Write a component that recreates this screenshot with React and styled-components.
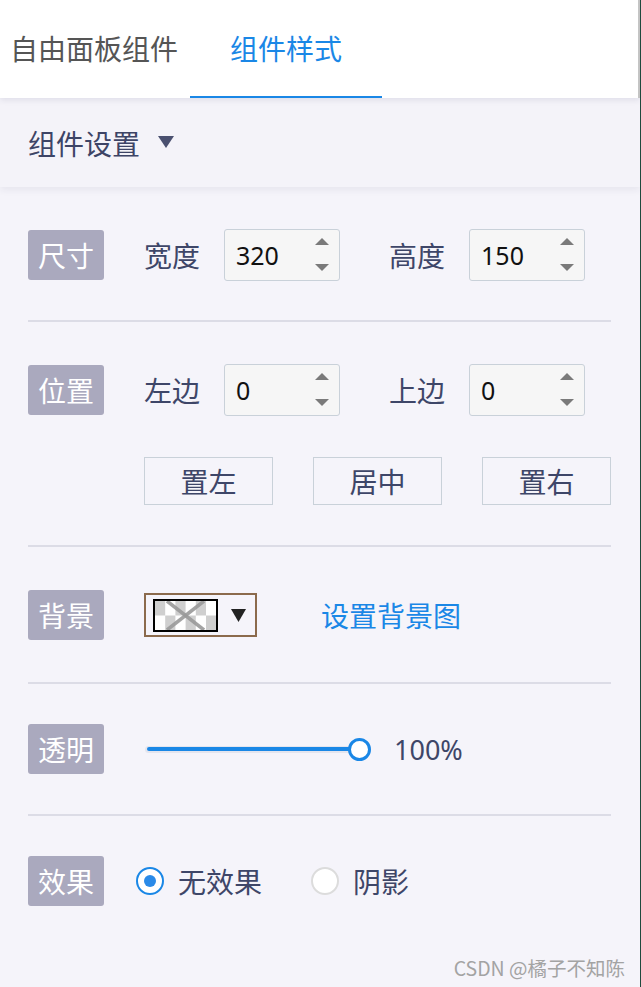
import React from 'react';
import styled, { createGlobalStyle } from 'styled-components';

const Global = createGlobalStyle`
  html, body { margin: 0; padding: 0; background: #f5f4fa; }
  body { font-family: "Noto Sans CJK SC", "Noto Sans", sans-serif; }
  * { box-sizing: border-box; }
`;

const Page = styled.div`
  position: relative;
  width: 641px;
  height: 987px;
  overflow: hidden;
  background: #f5f4fa;
  border-right: 1px solid #1f4a3e;
  display: flex;
  flex-direction: column;
`;

const Header = styled.div`
  position: relative;
  z-index: 2;
  height: 98px;
  background: #fff;
  display: flex;
  border-right: 2px solid #c4c4c4;
  box-shadow: 0 2px 6px rgba(40, 40, 90, 0.1);
`;

const Tab = styled.div`
  display: flex;
  align-items: center;
  padding: ${(p) => (p.$first ? '0 12px 0 10px' : '0 40px')};
  font-size: 28px;
  line-height: 1;
  color: ${(p) => (p.$active ? '#1a87e6' : '#555')};
  border-bottom: 2px solid ${(p) => (p.$active ? '#1a87e6' : 'transparent')};
`;

const SectionBar = styled.div`
  position: relative;
  z-index: 1;
  height: 89px;
  display: flex;
  align-items: center;
  padding-left: 28px;
  background: #f4f3f9;
  box-shadow: 0 3px 7px rgba(40, 40, 90, 0.07);
  font-size: 28px;
  line-height: 1;
  color: #3d4466;
`;

const Caret = styled.svg`
  margin-left: 18px;
  margin-top: -2px;
`;

const Content = styled.div`
  padding: 0 29px 0 28px;
`;

const Section = styled.div`
  padding: ${(p) => p.$pt ?? 43}px 0 ${(p) => p.$pb ?? 40}px;
  border-bottom: ${(p) => (p.$last ? 'none' : '2px solid #dcdce6')};
  display: flex;
  flex-direction: column;
  gap: 42px;
`;

const Row = styled.div`
  display: flex;
  align-items: center;
  height: 50px;
`;

const Tag = styled.div`
  flex: none;
  width: 76px;
  height: 50px;
  border-radius: 3px;
  background: #aaa9be;
  color: #fff;
  font-size: 28px;
  line-height: 1;
  display: flex;
  align-items: center;
  justify-content: center;
`;

const FieldLabel = styled.span`
  margin-left: ${(p) => p.$gap}px;
  font-size: 28px;
  line-height: 1;
  color: #3e4668;
`;

const NumberBox = styled.div`
  margin-left: 24px;
  width: 116px;
  height: 52px;
  border: 1px solid #c9d1d9;
  border-radius: 3px;
  background: #f6f6f6;
  display: flex;
  align-items: center;
  justify-content: space-between;
  padding: 0 9px 0 11px;
  font-family: "Noto Sans", sans-serif;
  font-size: 25px;
  color: #111;
`;

const ButtonRow = styled.div`
  display: flex;
  gap: 40px;
  padding-left: 116px;
  height: 48px;
`;

const Button = styled.div`
  width: 129px;
  height: 48px;
  border: 1px solid #c9d1d9;
  display: flex;
  align-items: center;
  justify-content: center;
  font-size: 28px;
  line-height: 1;
  color: #3e4668;
`;

const Swatch = styled.div`
  margin-left: 40px;
  width: 113px;
  height: 44px;
  border: 2px solid #8b6a4c;
  display: flex;
  align-items: center;
  padding-left: 7px;
`;

const SwatchInner = styled.div`
  width: 65px;
  height: 33px;
  border: 2px solid #000;
  display: flex;
`;

const SwatchCaret = styled.svg`
  margin-left: 13px;
`;

const Link = styled.span`
  margin-left: 64px;
  font-size: 28px;
  line-height: 1;
  color: #1a87e6;
`;

const Slider = styled.div`
  position: relative;
  margin-left: 41px;
  width: 226px;
  height: 24px;
  display: flex;
  align-items: center;
`;

const Rail = styled.div`
  width: 100%;
  height: 7px;
  border-radius: 4px;
  background: #e4e5ee;
  display: flex;
  align-items: center;
  padding: 0 2px;
`;

const Fill = styled.div`
  height: 4px;
  border-radius: 2px;
  background: #1a87e6;
`;

const Thumb = styled.div`
  position: absolute;
  right: 0;
  top: 1px;
  width: 23px;
  height: 23px;
  border-radius: 50%;
  background: #fff;
  border: 3px solid #1a87e6;
`;

const Value = styled.span`
  margin-left: 23px;
  font-family: "Noto Sans", sans-serif;
  font-size: 27px;
  line-height: 1;
  color: #3e4668;
`;

const Radio = styled.span`
  margin-left: ${(p) => p.$gap}px;
  width: 28px;
  height: 28px;
  border-radius: 50%;
  background: #fff;
  border: 2px solid ${(p) => (p.$checked ? '#1a87e6' : '#dcdcdc')};
  display: flex;
  align-items: center;
  justify-content: center;
  &::after {
    content: '';
    display: ${(p) => (p.$checked ? 'block' : 'none')};
    width: 12px;
    height: 12px;
    border-radius: 50%;
    background: #2a8ae8;
  }
`;

const RadioText = styled.span`
  margin-left: 14px;
  font-size: 28px;
  line-height: 1;
  color: #3e4668;
`;

const Watermark = styled.div`
  position: absolute;
  right: 15px;
  bottom: 8px;
  font-size: 19.5px;
  line-height: 1.2;
  color: #a3a3a3;
`;

function Spinner() {
  return (
    <svg width="16" height="36" viewBox="0 0 16 36">
      <polygon points="1,8 15,8 8,1" fill="#7a7a7a" />
      <polygon points="1,27 15,27 8,34" fill="#7a7a7a" />
    </svg>
  );
}

function NumberField({ value }) {
  return (
    <NumberBox>
      <span>{value}</span>
      <Spinner />
    </NumberBox>
  );
}

function Checker() {
  const cells = [];
  const cw = 10.2;
  const ch = 14.5;
  for (let r = 0; r < 2; r++) {
    for (let c = 0; c < 6; c++) {
      if ((r + c) % 2 === 0) {
        cells.push(<rect key={`${r}-${c}`} x={c * cw} y={r * ch} width={cw} height={ch} fill="#cfcfcf" />);
      }
    }
  }
  return (
    <svg width="61" height="29" viewBox="0 0 61 29">
      <rect width="61" height="29" fill="#fff" />
      {cells}
      <line x1="12" y1="0" x2="49" y2="29" stroke="#9a9a9a" strokeWidth="3.5" opacity="0.9" />
      <line x1="49" y1="0" x2="12" y2="29" stroke="#9a9a9a" strokeWidth="3.5" opacity="0.9" />
    </svg>
  );
}

export default function App() {
  return (
    <>
      <Global />
      <Page>
        <Header>
          <Tab $first>自由面板组件</Tab>
          <Tab $active>组件样式</Tab>
        </Header>
        <SectionBar>
          组件设置
          <Caret width="16" height="12" viewBox="0 0 16 12">
            <polygon points="0,0 16,0 8,12" fill="#4a5070" />
          </Caret>
        </SectionBar>
        <Content>
          <Section>
            <Row>
              <Tag>尺寸</Tag>
              <FieldLabel $gap={40}>宽度</FieldLabel>
              <NumberField value="320" />
              <FieldLabel $gap={49}>高度</FieldLabel>
              <NumberField value="150" />
            </Row>
          </Section>
          <Section>
            <Row>
              <Tag>位置</Tag>
              <FieldLabel $gap={40}>左边</FieldLabel>
              <NumberField value="0" />
              <FieldLabel $gap={49}>上边</FieldLabel>
              <NumberField value="0" />
            </Row>
            <ButtonRow>
              <Button>置左</Button>
              <Button>居中</Button>
              <Button>置右</Button>
            </ButtonRow>
          </Section>
          <Section $pt={43} $pb={42}>
            <Row>
              <Tag>背景</Tag>
              <Swatch>
                <SwatchInner>
                  <Checker />
                </SwatchInner>
                <SwatchCaret width="15" height="13" viewBox="0 0 15 13">
                  <polygon points="0,0 15,0 7.5,13" fill="#222" />
                </SwatchCaret>
              </Swatch>
              <Link>设置背景图</Link>
            </Row>
          </Section>
          <Section $pt={40} $pb={40}>
            <Row>
              <Tag>透明</Tag>
              <Slider>
                <Rail>
                  <Fill style={{ width: '100%' }} />
                </Rail>
                <Thumb />
              </Slider>
              <Value>100%</Value>
            </Row>
          </Section>
          <Section $last $pt={40}>
            <Row>
              <Tag>效果</Tag>
              <Radio $checked $gap={32} />
              <RadioText>无效果</RadioText>
              <Radio $gap={49} />
              <RadioText>阴影</RadioText>
            </Row>
          </Section>
        </Content>
        <Watermark>CSDN @橘子不知陈</Watermark>
      </Page>
    </>
  );
}
